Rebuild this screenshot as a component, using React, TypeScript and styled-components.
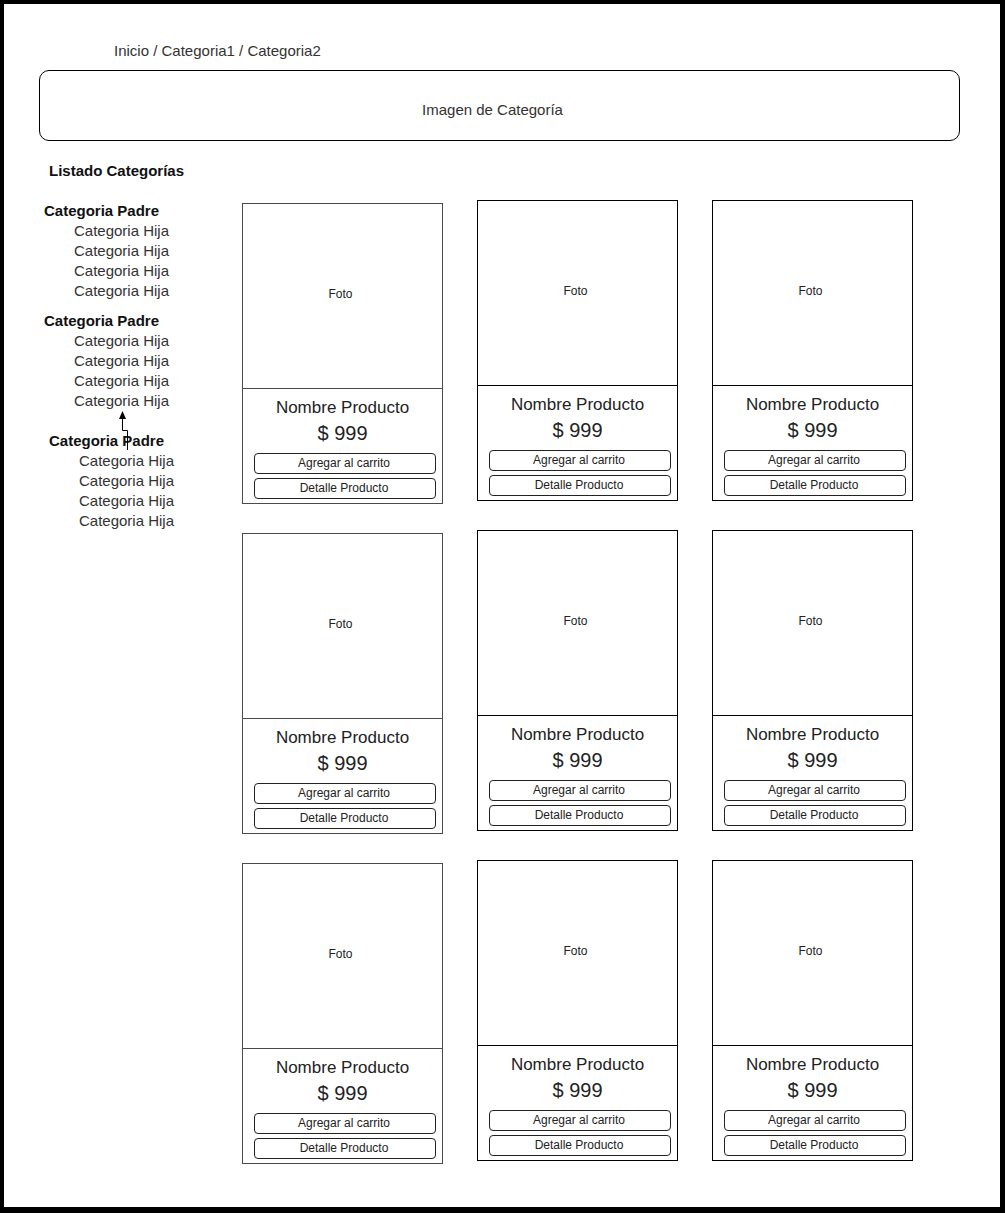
import React from 'react';
import styled, { createGlobalStyle } from 'styled-components';

const GlobalStyle = createGlobalStyle`
  html, body {
    margin: 0;
    padding: 0;
    background: #fff;
  }
  body {
    font-family: "Liberation Sans", Arial, sans-serif;
    color: #222;
  }
`;

const Frame = styled.div`
  position: relative;
  box-sizing: border-box;
  width: 1005px;
  height: 1213px;
  border-style: solid;
  border-color: #000;
  border-width: 4px 5px 6px 4px;
  background: #fff;
  overflow: hidden;
`;

const Breadcrumb = styled.div`
  margin-top: 38px;
  padding-left: 110px;
  font-size: 15px;
  line-height: 17px;
  color: #333;
`;

const Banner = styled.div`
  box-sizing: border-box;
  margin: 11px 0 0 35px;
  width: 921px;
  height: 71px;
  border: 1px solid #000;
  border-radius: 10px;
  display: flex;
  align-items: center;
  justify-content: center;
  padding: 8px 14px 0 0;
  font-size: 15px;
  color: #333;
`;

const Content = styled.div`
  display: flex;
  align-items: flex-start;
`;

const Sidebar = styled.aside`
  position: relative;
  width: 238px;
  flex-shrink: 0;
  padding-top: 22px;
`;

const SidebarTitle = styled.div`
  padding-left: 45px;
  font-size: 15px;
  font-weight: 700;
  line-height: 16px;
  color: #111;
`;

const Group = styled.div<{ $gap: number; $shift: number }>`
  margin-top: ${p => p.$gap}px;
  padding-left: ${p => 40 + p.$shift}px;
`;

const Parent = styled.div`
  font-size: 15px;
  font-weight: 700;
  line-height: 17px;
  margin-bottom: 2px;
  color: #111;
`;

const Child = styled.div`
  padding-left: 30px;
  font-size: 15px;
  line-height: 20px;
  color: #333;
`;

const ArrowMark = styled.svg`
  position: absolute;
  left: 0;
  top: 0;
  pointer-events: none;
  overflow: visible;
`;

const ProductGrid = styled.div`
  margin-top: 59px;
  display: grid;
  grid-template-columns: repeat(3, 201px);
  column-gap: 34px;
  row-gap: 26px;
  align-items: start;
`;

const Card = styled.div<{ $shifted: boolean }>`
  box-sizing: border-box;
  height: 301px;
  margin-top: ${p => (p.$shifted ? 3 : 0)}px;
  border: 1px solid ${p => (p.$shifted ? '#4a4a4a' : '#000')};
  display: flex;
  flex-direction: column;
`;

const Photo = styled.div`
  height: 184px;
  display: flex;
  align-items: center;
  justify-content: center;
  padding: 0 4px 4px 0;
  box-sizing: border-box;
  font-size: 12px;
  color: #222;
`;

const Info = styled.div<{ $shifted: boolean }>`
  flex: 1;
  border-top: 1px solid ${p => (p.$shifted ? '#4a4a4a' : '#000')};
  padding-top: 9px;
  display: flex;
  flex-direction: column;
  align-items: stretch;
`;

const ProductName = styled.div`
  text-align: center;
  font-size: 17px;
  line-height: 20px;
  color: #222;
`;

const Price = styled.div`
  margin-top: 3px;
  text-align: center;
  font-size: 20px;
  line-height: 24px;
  color: #222;
`;

const Actions = styled.div`
  margin: 8px 0 0 11px;
  display: flex;
  flex-direction: column;
  gap: 4px;
`;

const ActionButton = styled.button`
  box-sizing: border-box;
  width: 182px;
  height: 21px;
  padding: 0 2px 0 0;
  border: 1px solid #222;
  border-radius: 4px;
  background: #fff;
  font-family: "Liberation Sans", Arial, sans-serif;
  font-size: 12px;
  line-height: 19px;
  color: #222;
  text-align: center;
  cursor: pointer;
`;

const groups = [
  { gap: 23, shift: 0 },
  { gap: 11, shift: 0 },
  { gap: 21, shift: 5 },
];

const products = Array.from({ length: 9 }, (_, i) => i);

const App: React.FC = () => {
  return (
    <>
      <GlobalStyle />
      <Frame>
        <Breadcrumb>Inicio / Categoria1 / Categoria2</Breadcrumb>
        <Banner>Imagen de Categoría</Banner>
        <Content>
          <Sidebar>
            <SidebarTitle>Listado Categorías</SidebarTitle>
            {groups.map((g, i) => (
              <Group key={i} $gap={g.gap} $shift={g.shift}>
                <Parent>Categoria Padre</Parent>
                {[0, 1, 2, 3].map(j => (
                  <Child key={j}>Categoria Hija</Child>
                ))}
              </Group>
            ))}
            {/* connector arrow drawn over the list, coords relative to sidebar (origin 4,141) */}
            <ArrowMark width="238" height="400">
              <path
                d="M123.5 309 V289.5 H118.5 V276"
                fill="none"
                stroke="#000"
                strokeWidth="1"
              />
              <polygon points="118.5,270 115,278 122,278" fill="#000" />
            </ArrowMark>
          </Sidebar>
          <ProductGrid>
            {products.map(i => {
              const shifted = i % 3 === 0;
              return (
                <Card key={i} $shifted={shifted}>
                  <Photo>Foto</Photo>
                  <Info $shifted={shifted}>
                    <ProductName>Nombre Producto</ProductName>
                    <Price>$ 999</Price>
                    <Actions>
                      <ActionButton>Agregar al carrito</ActionButton>
                      <ActionButton>Detalle Producto</ActionButton>
                    </Actions>
                  </Info>
                </Card>
              );
            })}
          </ProductGrid>
        </Content>
      </Frame>
    </>
  );
};

export default App;
